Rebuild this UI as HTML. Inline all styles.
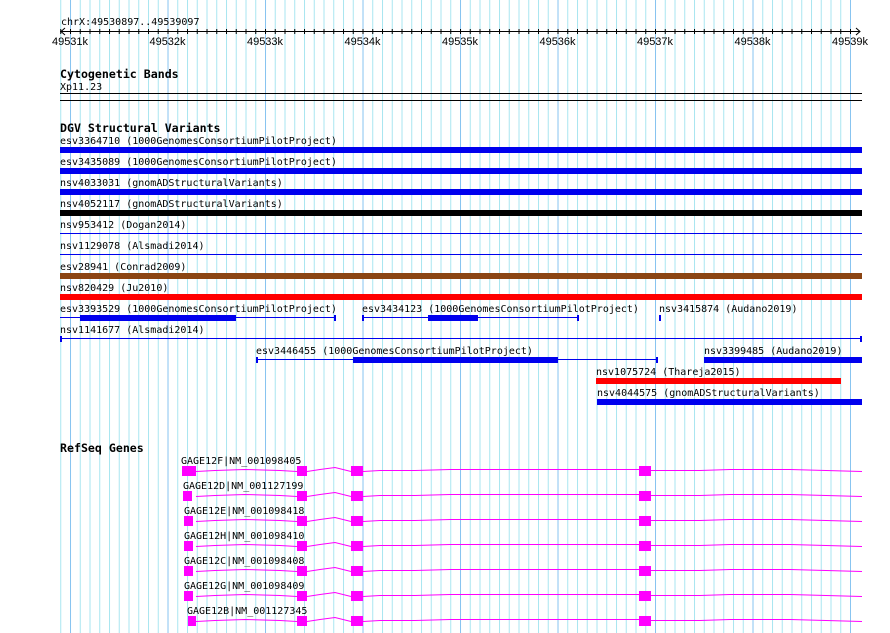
<!DOCTYPE html>
<html><head><meta charset="utf-8"><style>
html,body{margin:0;padding:0;background:#fff;width:890px;height:633px;overflow:hidden}
svg{display:block}
text{font-family:"DejaVu Sans Mono","Liberation Mono",monospace;font-size:10px;fill:#000}
.b{font-family:"DejaVu Sans Mono","Liberation Mono",monospace;font-weight:bold;font-size:11.6px}
.r{font-family:"Liberation Sans","DejaVu Sans",sans-serif;font-size:11px}
</style></head><body>
<svg width="890" height="633" viewBox="0 0 890 633" xmlns="http://www.w3.org/2000/svg">
<defs>
<pattern id="g" x="60.25" y="0" width="9.75" height="633" patternUnits="userSpaceOnUse">
<rect x="0" y="0" width="1" height="633" fill="#a8e6f0"/>
</pattern>
<pattern id="t" x="60.25" y="0" width="9.75" height="633" patternUnits="userSpaceOnUse">
<rect x="0" y="29" width="1" height="5" fill="#000"/>
</pattern>
</defs>
<rect x="60" y="0" width="791" height="633" fill="url(#g)"/>
<g fill="#88c4f0">
<rect x="70" y="0" width="1" height="633"/><rect x="167.5" y="0" width="1" height="633"/>
<rect x="265" y="0" width="1" height="633"/><rect x="362.5" y="0" width="1" height="633"/>
<rect x="460" y="0" width="1" height="633"/><rect x="557.5" y="0" width="1" height="633"/>
<rect x="655" y="0" width="1" height="633"/><rect x="752.5" y="0" width="1" height="633"/>
<rect x="850" y="0" width="1" height="633"/>
</g>
<text x="61" y="25">chrX:49530897..49539097</text>
<rect x="60" y="31" width="800" height="1" fill="#000"/>
<rect x="60" y="0" width="791" height="633" fill="url(#t)"/>
<path d="M65 28 L61 31.5 L65 35 M856 28 L860 31.5 L856 35" stroke="#000" fill="none"/>
<g text-anchor="middle">
<text class="r" x="70" y="45">49531k</text><text class="r" x="167.5" y="45">49532k</text><text class="r" x="265" y="45">49533k</text>
<text class="r" x="362.5" y="45">49534k</text><text class="r" x="460" y="45">49535k</text><text class="r" x="557.5" y="45">49536k</text>
<text class="r" x="655" y="45">49537k</text><text class="r" x="752.5" y="45">49538k</text><text class="r" x="850" y="45">49539k</text>
</g>
<text class="b" x="60" y="78">Cytogenetic Bands</text>
<text x="60" y="90">Xp11.23</text>
<rect x="60" y="93" width="802" height="1" fill="#000"/>
<rect x="60" y="100" width="802" height="1" fill="#000"/>
<text class="b" x="60" y="132">DGV Structural Variants</text>
<text x="60" y="144">esv3364710 (1000GenomesConsortiumPilotProject)</text>
<rect x="60" y="147" width="802" height="6" fill="#0000ee"/>
<text x="60" y="165">esv3435089 (1000GenomesConsortiumPilotProject)</text>
<rect x="60" y="168" width="802" height="6" fill="#0000ee"/>
<text x="60" y="186">nsv4033031 (gnomADStructuralVariants)</text>
<rect x="60" y="189" width="802" height="6" fill="#0000ee"/>
<text x="60" y="207">nsv4052117 (gnomADStructuralVariants)</text>
<rect x="60" y="210" width="802" height="6" fill="#000"/>
<text x="60" y="228">nsv953412 (Dogan2014)</text>
<rect x="60" y="233" width="802" height="1" fill="#0000ee"/>
<text x="60" y="249">nsv1129078 (Alsmadi2014)</text>
<rect x="60" y="254" width="802" height="1" fill="#0000ee"/>
<text x="60" y="270">esv28941 (Conrad2009)</text>
<rect x="60" y="273" width="802" height="6" fill="#8b4513"/>
<text x="60" y="291">nsv820429 (Ju2010)</text>
<rect x="60" y="294" width="802" height="6" fill="#ff0000"/>
<g fill="#0000ee">
<text x="60" y="312">esv3393529 (1000GenomesConsortiumPilotProject)</text>
<rect x="60" y="317" width="275" height="1"/><rect x="80" y="315" width="156" height="6"/><rect x="334" y="315" width="2" height="6"/>
<text x="362" y="312">esv3434123 (1000GenomesConsortiumPilotProject)</text>
<rect x="363" y="317" width="215" height="1"/><rect x="362" y="315" width="2" height="6"/><rect x="428" y="315" width="50" height="6"/><rect x="577" y="315" width="2" height="6"/>
<text x="659" y="312">nsv3415874 (Audano2019)</text>
<rect x="659" y="315" width="2" height="6"/>
<text x="60" y="333">nsv1141677 (Alsmadi2014)</text>
<rect x="60" y="338" width="802" height="1"/><rect x="60" y="336" width="2" height="6"/><rect x="860" y="336" width="2" height="6"/>
<text x="256" y="354">esv3446455 (1000GenomesConsortiumPilotProject)</text>
<rect x="257" y="359" width="400" height="1"/><rect x="256" y="357" width="2" height="6"/><rect x="353" y="357" width="205" height="6"/><rect x="656" y="357" width="2" height="6"/>
<text x="704" y="354">nsv3399485 (Audano2019)</text>
<rect x="704" y="357" width="158" height="6"/>
<text x="596" y="375">nsv1075724 (Thareja2015)</text>
<rect x="596" y="378" width="245" height="6" fill="#ff0000"/>
<text x="597" y="396">nsv4044575 (gnomADStructuralVariants)</text>
<rect x="597" y="399" width="265" height="6"/>
</g>
<text class="b" x="60" y="452">RefSeq Genes</text>
<g>
<text x="181" y="464">GAGE12F|NM_001098405</text>
<text x="183" y="489">GAGE12D|NM_001127199</text>
<text x="184" y="514">GAGE12E|NM_001098418</text>
<text x="184" y="539">GAGE12H|NM_001098410</text>
<text x="184" y="564">GAGE12C|NM_001098408</text>
<text x="184" y="589">GAGE12G|NM_001098409</text>
<text x="187" y="614">GAGE12B|NM_001127345</text>
</g>
<g fill="none" stroke="#ff00ff" stroke-width="1">
<path id="ln" d="M196 471.5 L215 470.5 L245 469.5 L280 470.5 L297 471.5 M307 471.5 L320 469.5 L335 467.5 L351 471.5 M363 471.5 L380 470.5 L415 470.5 L450 469.5 L520 469.5 L640 469.5 M651 470.5 L700 470.5 L730 469.5 L790 469.5 L862 471.5"/>
<use href="#ln" y="25"/><use href="#ln" y="50"/><use href="#ln" y="75"/><use href="#ln" y="100"/><use href="#ln" y="125"/><use href="#ln" y="150"/>
</g>
<g fill="#ff00ff">
<g id="ex"><rect x="297" y="466" width="10" height="10"/><rect x="351" y="466" width="12" height="10"/><rect x="639" y="466" width="12" height="10"/></g>
<use href="#ex" y="25"/><use href="#ex" y="50"/><use href="#ex" y="75"/><use href="#ex" y="100"/><use href="#ex" y="125"/><use href="#ex" y="150"/>
<rect x="182" y="466" width="14" height="10"/>
<rect x="183" y="491" width="9" height="10"/>
<rect x="184" y="516" width="9" height="10"/>
<rect x="184" y="541" width="9" height="10"/>
<rect x="184" y="566" width="9" height="10"/>
<rect x="184" y="591" width="9" height="10"/>
<rect x="188" y="616" width="8" height="10"/>
</g>
</svg>
</body></html>
